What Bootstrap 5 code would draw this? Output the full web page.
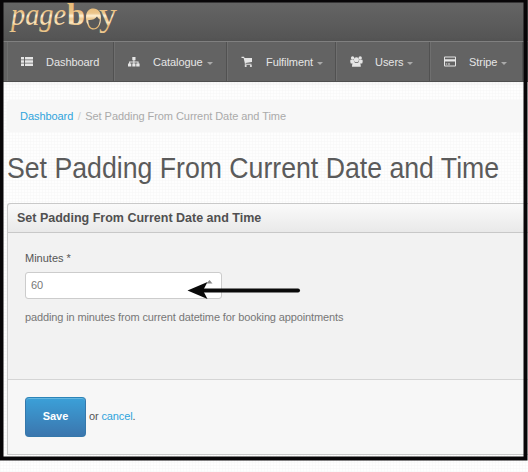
<!DOCTYPE html>
<html lang="en">
<head>
<meta charset="utf-8">
<title>Set Padding From Current Date and Time</title>
<link href="https://cdn.jsdelivr.net/npm/bootstrap@5.3.0/dist/css/bootstrap.min.css" rel="stylesheet">
<style>
html,body{height:472px;overflow:hidden}
body{font:11px/18px "Liberation Sans",Arial,sans-serif;color:#555;background-color:#fefefe;
background-image:linear-gradient(90deg,#f6f6f688 1px,transparent 1px),linear-gradient(#f6f6f688 1px,transparent 1px);background-size:3px 3px}
a{color:#2fa4dc;text-decoration:none}
.page-wrap{width:528px;height:472px}
.brand-bar{height:41px;background:linear-gradient(#666,#545454)}
.main-nav{height:41px;background:#636363;border-top:1px solid #808080;border-bottom:1px solid #4f4f4f;box-shadow:0 1px 6px #0000000d}
.main-nav .nav-link{height:39px;color:#e6e6e6;border-left:1px solid #6f6f6f;border-right:1px solid #515151;padding:0 0 0 13px;font-size:11px}
.main-nav .nav-link svg{width:13px;height:13px;fill:#e6e6e6;flex:none}
.main-nav .nav-link span{margin-left:12px;letter-spacing:-.06px}
.main-nav .nav-link i{border:3px solid transparent;border-top-color:#aaa;border-bottom:0;margin:4px 0 0 4px}
.main-nav .w-dash{width:107px;margin-left:7px}.w-cat{width:113px}.w-ful{width:109px}.w-usr{width:94px}.w-str{width:93px}
.crumbs{margin:18px 0 0 7px;height:32px;background:#f7f7f7;padding:0 13px;border-radius:3px;font-size:11px;letter-spacing:-.06px;--bs-breadcrumb-item-padding-x:4.5px;--bs-breadcrumb-divider-color:#ccc}
.crumbs .active{color:#aaa}
.page-title{margin:16px 0 0 7px;font-size:29.5px;line-height:40px;height:55px;width:545px;color:#5b5b5b;font-weight:400;white-space:nowrap;transform:scaleX(.904);transform-origin:0 0}
.form-panel{margin-left:7px;height:252px;border:1px solid #c9c9c9;border-right:0;border-radius:3px 0 0 0;background:#f2f2f2}
.form-panel .card-header{height:29px;background:linear-gradient(#fafafa,#e9e9e9);border-bottom:1px solid #c8c8c8;padding:0 9px;font-size:12.5px;line-height:28px;font-weight:700;color:#505050;white-space:nowrap}
.form-panel .card-body{padding:16px 17px 0}
.form-panel label{height:23px;color:#555}
.form-panel .form-control{width:197px;height:27px;font-size:11px;padding:0 5px 2px;border-color:#ccc;border-radius:3px;color:#777}
.help{margin-top:9px;color:#777;font-size:11px;letter-spacing:-.126px}
.form-panel .card-footer{height:75px;background:#f7f7f7;border-top:1px solid #d5d5d5;padding:0 17px}
.btn-save{width:61px;height:40px;font-size:11px;font-weight:700;color:#fff;background:linear-gradient(#3ba0d8,#3b76ae);border:1px solid #3578ab;border-top-color:#2b84b8;border-radius:4px;box-shadow:inset 0 1px 0 #66b7e0;padding:0 0 2px}
.after-save{margin-left:3px;padding-bottom:2px;letter-spacing:-.12px}
.overlay{inset:0;width:528px;height:472px;pointer-events:none}
</style>
<script src="https://cdn.jsdelivr.net/npm/bootstrap@5.3.0/dist/js/bootstrap.bundle.min.js"></script>
</head>
<body>
<div class="page-wrap position-relative overflow-hidden">
<header>
<div class="brand-bar">
<svg class="d-block" width="125" height="41" role="img" aria-label="pageboy">
<defs><linearGradient id="gold" x1="0" y1="8" x2="0" y2="34" gradientUnits="userSpaceOnUse"><stop offset="0" stop-color="#e9bd7b"/><stop offset=".2" stop-color="#ecc68c"/><stop offset=".3" stop-color="#fff0d2"/><stop offset=".42" stop-color="#edc88e"/><stop offset=".56" stop-color="#fbe5bd"/><stop offset=".7" stop-color="#e2b36e"/><stop offset="1" stop-color="#f0cf98"/></linearGradient></defs>
<g fill="url(#gold)" font-family="Liberation Serif,serif">
<text x="11" y="25" font-size="32" font-style="italic" textLength="55" lengthAdjust="spacingAndGlyphs">page</text>
<text x="67" y="25" font-size="32" font-weight="700" textLength="18" lengthAdjust="spacingAndGlyphs">b</text>
<text x="99" y="26" font-size="34" textLength="18" lengthAdjust="spacingAndGlyphs">y</text>
<path d="M86 18C86 11 89 8.500 93.500 8.500S101 12 101 18C101 25 98 29.500 93.500 29.500C90 29.500 88 27 87.600 24.500Q86 22 86 18z"/></g>
<path d="M88.300 20Q94 20.500 97 16.500 98 18.500 99.800 19.500C99.500 25 97 28.300 93.500 28.300C90 28.300 88.300 24.500 88.300 20z" fill="#595959"/>
</svg>
</div>
<nav class="main-nav navbar-nav flex-row p-0">
<a class="nav-link w-dash d-flex align-items-center" href="#"><svg viewBox="0 0 13 13"><path d="M0 2h3v2.500H0zM4 2h8v2.500H4zM0 5.300h3v2.500H0zM4 5.300h8v2.500H4zM0 8.600h3v2.500H0zM4 8.600h8v2.500H4z"/></svg><span>Dashboard</span></a>
<a class="nav-link w-cat d-flex align-items-center" href="#"><svg viewBox="0 0 13 13"><path d="M4.300 2h3.200v3.200H6.400v1.300h4.200v2h1v3H8.200v-3h1.300v-1H6.400v1h1.100v3H4.300v-3h1.100v-1H2.200v1h1.100v3H0v-3h1.100v-2h4.300V5.200H4.300z"/></svg><span>Catalogue</span><i></i></a>
<a class="nav-link w-ful d-flex align-items-center" href="#"><svg viewBox="0 0 13 13"><path d="M.5 1.800h2.600l.4 1.100H11v4L4.600 8v.8h5.900v.9H3.800V8L2.600 2.900H.5z"/><circle cx="4.700" cy="11" r="1.100"/><circle cx="9.900" cy="11" r="1.100"/></svg><span>Fulfilment</span><i></i></a>
<a class="nav-link w-usr d-flex align-items-center" href="#"><svg viewBox="0 0 13 13"><circle cx="2.600" cy="3" r="1.700"/><circle cx="10.200" cy="3" r="1.700"/><circle cx="6.400" cy="4.800" r="2.500"/><path d="M.5 4.800h3.200q.2 2 1.400 2.600-1.800 0-2 1H.8q-.9-2-.3-3.600zM9.200 4.800h3.200q.7 1.600-.2 3.600H10q-.3-1-2-1Q9.200 7 9.200 4.800zM3.800 7.200Q6.400 8.600 9 7.200q1.800.6 1.800 4.600H2q0-4 1.800-4.600z"/></svg><span>Users</span><i></i></a>
<a class="nav-link w-str d-flex align-items-center" href="#"><svg viewBox="0 0 13 13"><path fill-rule="evenodd" d="M1 1.500h10q1 0 1 1v8q0 1-1 1H1q-1 0-1-1v-8q0-1 1-1zM1 2.500v1.700h10V2.500zM1 6.500v4h10v-4zM1.800 8.500h1.400v1H1.800zM4 8.500h2v1H4z"/></svg><span>Stripe</span><i></i></a>
</nav>
</header>
<main>
<ol class="crumbs breadcrumb align-items-center"><li class="breadcrumb-item"><a href="#">Dashboard</a></li><li class="breadcrumb-item active">Set Padding From Current Date and Time</li></ol>
<h1 class="page-title">Set Padding From Current Date and Time</h1>
<form class="form-panel card">
<div class="card-header">Set Padding From Current Date and Time</div>
<div class="card-body"><label class="d-block" for="minutes">Minutes *</label><input class="form-control" id="minutes" value="60"><div class="help">padding in minutes from current datetime for booking appointments</div></div>
<div class="card-footer d-flex align-items-center"><button type="button" class="btn btn-save">Save</button><span class="after-save">or <a href="#">cancel</a>.</span></div>
</form>
</main>
<svg class="overlay position-absolute" viewBox="0 0 528 472">
<path d="M206.500 283.500l3-3.500 3 3.500z" fill="#888"/>
<path d="M204 290.500H298" stroke="#0a0a0a" stroke-width="4" stroke-linecap="round"/>
<path d="M187.500 290.500l20-8.500-4.500 8.500 4.500 8.500z" fill="#0a0a0a"/>
<rect x="1.500" y="0.500" width="524" height="458" fill="none" stroke="#080608" stroke-width="4"/>
</svg>
</div>
</body>
</html>
